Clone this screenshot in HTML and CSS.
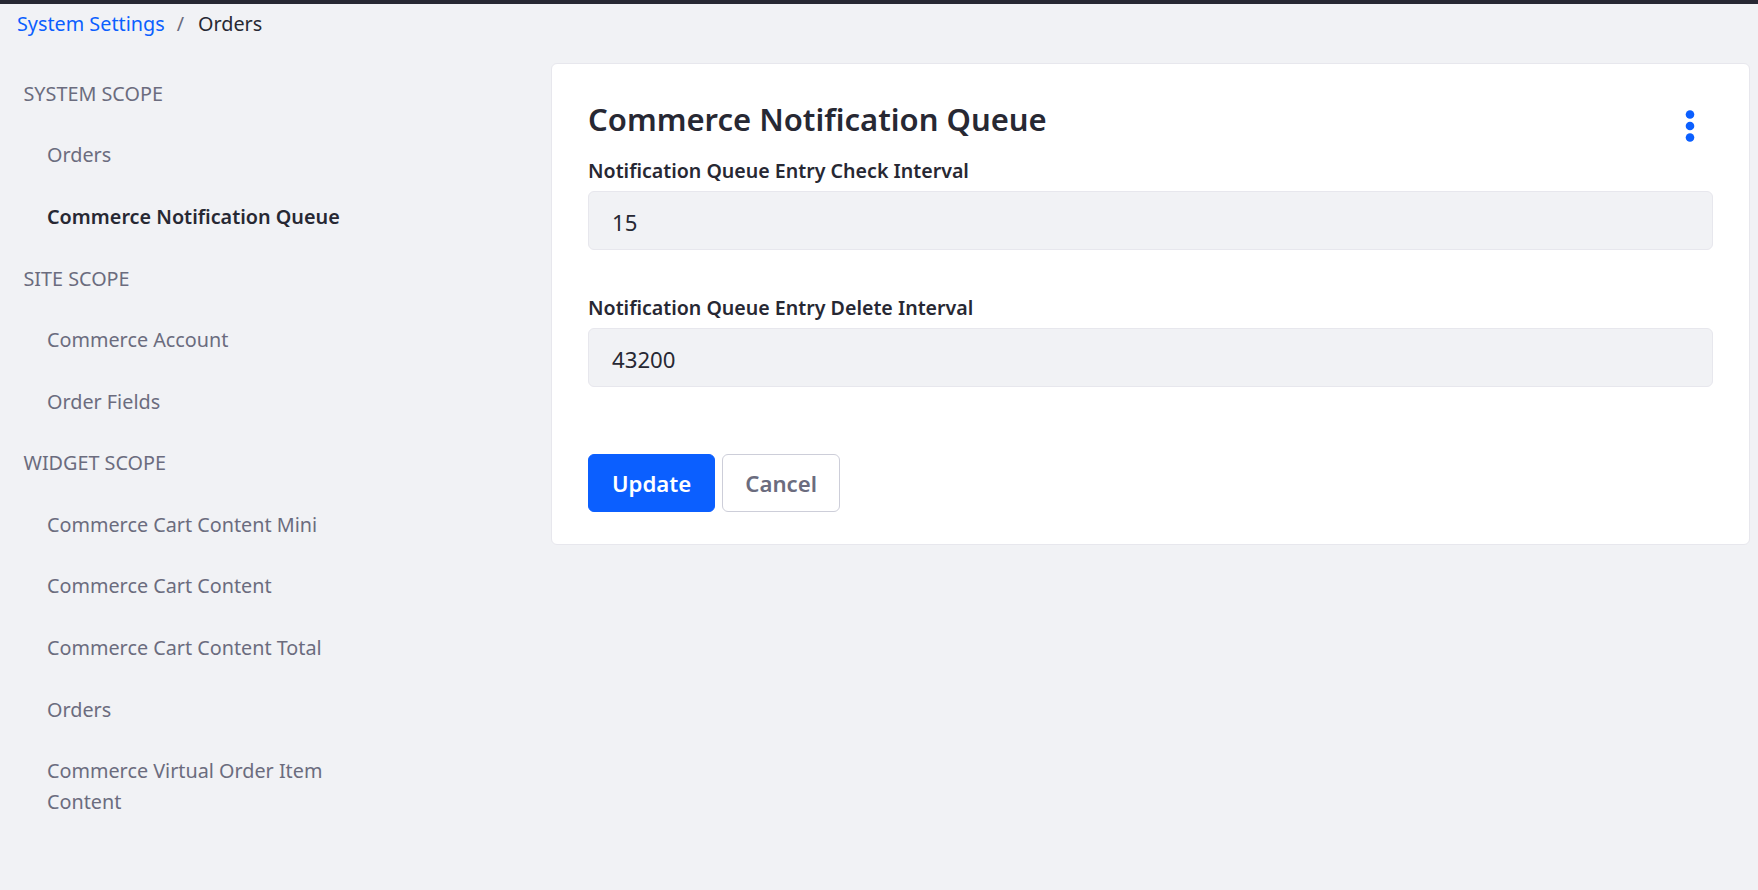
FILE: index.html
```html
<!DOCTYPE html>
<html lang="en">
<head>
<meta charset="utf-8">
<title>System Settings - Orders</title>
<link rel="stylesheet" href="styles.css">
</head>
<body>
<div class="topbar"></div>
<nav class="breadcrumb">
  <a class="crumb-link" href="#">System Settings</a>
  <span class="crumb-sep">/</span>
  <span class="crumb-current">Orders</span>
</nav>
<div class="layout">
  <aside class="sidebar">
    <ul class="nav">
      <li class="nav-heading">SYSTEM SCOPE</li>
      <li class="nav-item">Orders</li>
      <li class="nav-item active">Commerce Notification Queue</li>
      <li class="nav-heading">SITE SCOPE</li>
      <li class="nav-item">Commerce Account</li>
      <li class="nav-item">Order Fields</li>
      <li class="nav-heading">WIDGET SCOPE</li>
      <li class="nav-item">Commerce Cart Content Mini</li>
      <li class="nav-item">Commerce Cart Content</li>
      <li class="nav-item">Commerce Cart Content Total</li>
      <li class="nav-item">Orders</li>
      <li class="nav-item">Commerce Virtual Order Item Content</li>
    </ul>
  </aside>
  <main class="card">
    <div class="card-header">
      <h2 class="card-title">Commerce Notification Queue</h2>
      <button class="kebab" aria-label="Options">
        <svg width="10" height="32" viewBox="0 0 10 32"><circle cx="5" cy="4.5" r="4.3" fill="#0b5fff"/><circle cx="5" cy="16" r="4.3" fill="#0b5fff"/><circle cx="5" cy="27.5" r="4.3" fill="#0b5fff"/></svg>
      </button>
    </div>
    <div class="form-group">
      <label class="form-label">Notification Queue Entry Check Interval</label>
      <div class="form-input">15</div>
    </div>
    <div class="form-group">
      <label class="form-label">Notification Queue Entry Delete Interval</label>
      <div class="form-input">43200</div>
    </div>
    <div class="actions">
      <button class="btn btn-primary">Update</button>
      <button class="btn btn-secondary">Cancel</button>
    </div>
  </main>
</div>
</body>
</html>
```
FILE: styles.css
```css
* { box-sizing: border-box; }
html, body { margin: 0; padding: 0; }
body {
  background: #f1f2f5;
  font-family: "Noto Sans", "Open Sans", sans-serif;
  color: #272833;
  font-size: 19.8px;
  line-height: 31.2px;
  height: 890px;
  overflow: hidden;
}
.topbar { height: 4px; background: #272833; }
.breadcrumb {
  padding: 0 17px;
  height: 39px;
  display: flex;
  align-items: center;
}
.crumb-link { color: #0b5fff; text-decoration: none; }
.crumb-sep { color: #6b6c7e; margin: 0 14px 0 12px; }
.crumb-current { color: #272833; }
.layout { display: flex; margin-top: 19.6px; align-items: flex-start; }
.sidebar { flex: 0 0 551px; }
.nav { list-style: none; margin: 0; padding: 0; width: 395px; }
.nav-heading, .nav-item { padding: 15.2px 0; color: #6b6c7e; }
.nav-heading { padding-left: 23.5px; }
.nav-item { padding-left: 47px; }
.nav-item.active { color: #272833; font-weight: 600; }
.card {
  flex: 1;
  margin-right: 8px;
  background: #fff;
  border: 1px solid #e7e7ed;
  border-radius: 6px;
  padding: 36px 36px 32px;
}
.card-header { display: flex; justify-content: space-between; align-items: flex-start; height: 39px; }
.card-title { margin: 0; font-size: 31px; line-height: 39px; font-weight: 600; }
.kebab {
  width: 46px; height: 39px; border: 0; background: transparent; padding: 10px 0 0;
  display: flex; justify-content: center; align-items: flex-start;
}
.form-group { margin-top: 15.4px; }
.form-group + .form-group { margin-top: 40.8px; }
.form-label { display: block; font-weight: 600; font-size: 19.6px; margin-bottom: 6px; position: relative; top: 1px; }
.form-input {
  height: 59px;
  background: #f1f2f5;
  border: 1px solid #e7e7ed;
  border-radius: 6px;
  padding: 3px 23px 0;
  font-size: 22.2px;
  display: flex;
  align-items: center;
}
.actions { display: flex; gap: 7px; margin-top: 66.4px; }
.btn {
  height: 58px;
  padding: 2px 23px 0;
  border-radius: 6px;
  font-family: inherit;
  font-size: 22.2px;
  font-weight: 600;
}
.btn-primary { background: #0b5fff; border: 1px solid #0b5fff; color: #fff; }
.btn-secondary { background: #fff; border: 1px solid #cdced9; color: #6b6c7e; padding: 2px 22px 0; }
```
